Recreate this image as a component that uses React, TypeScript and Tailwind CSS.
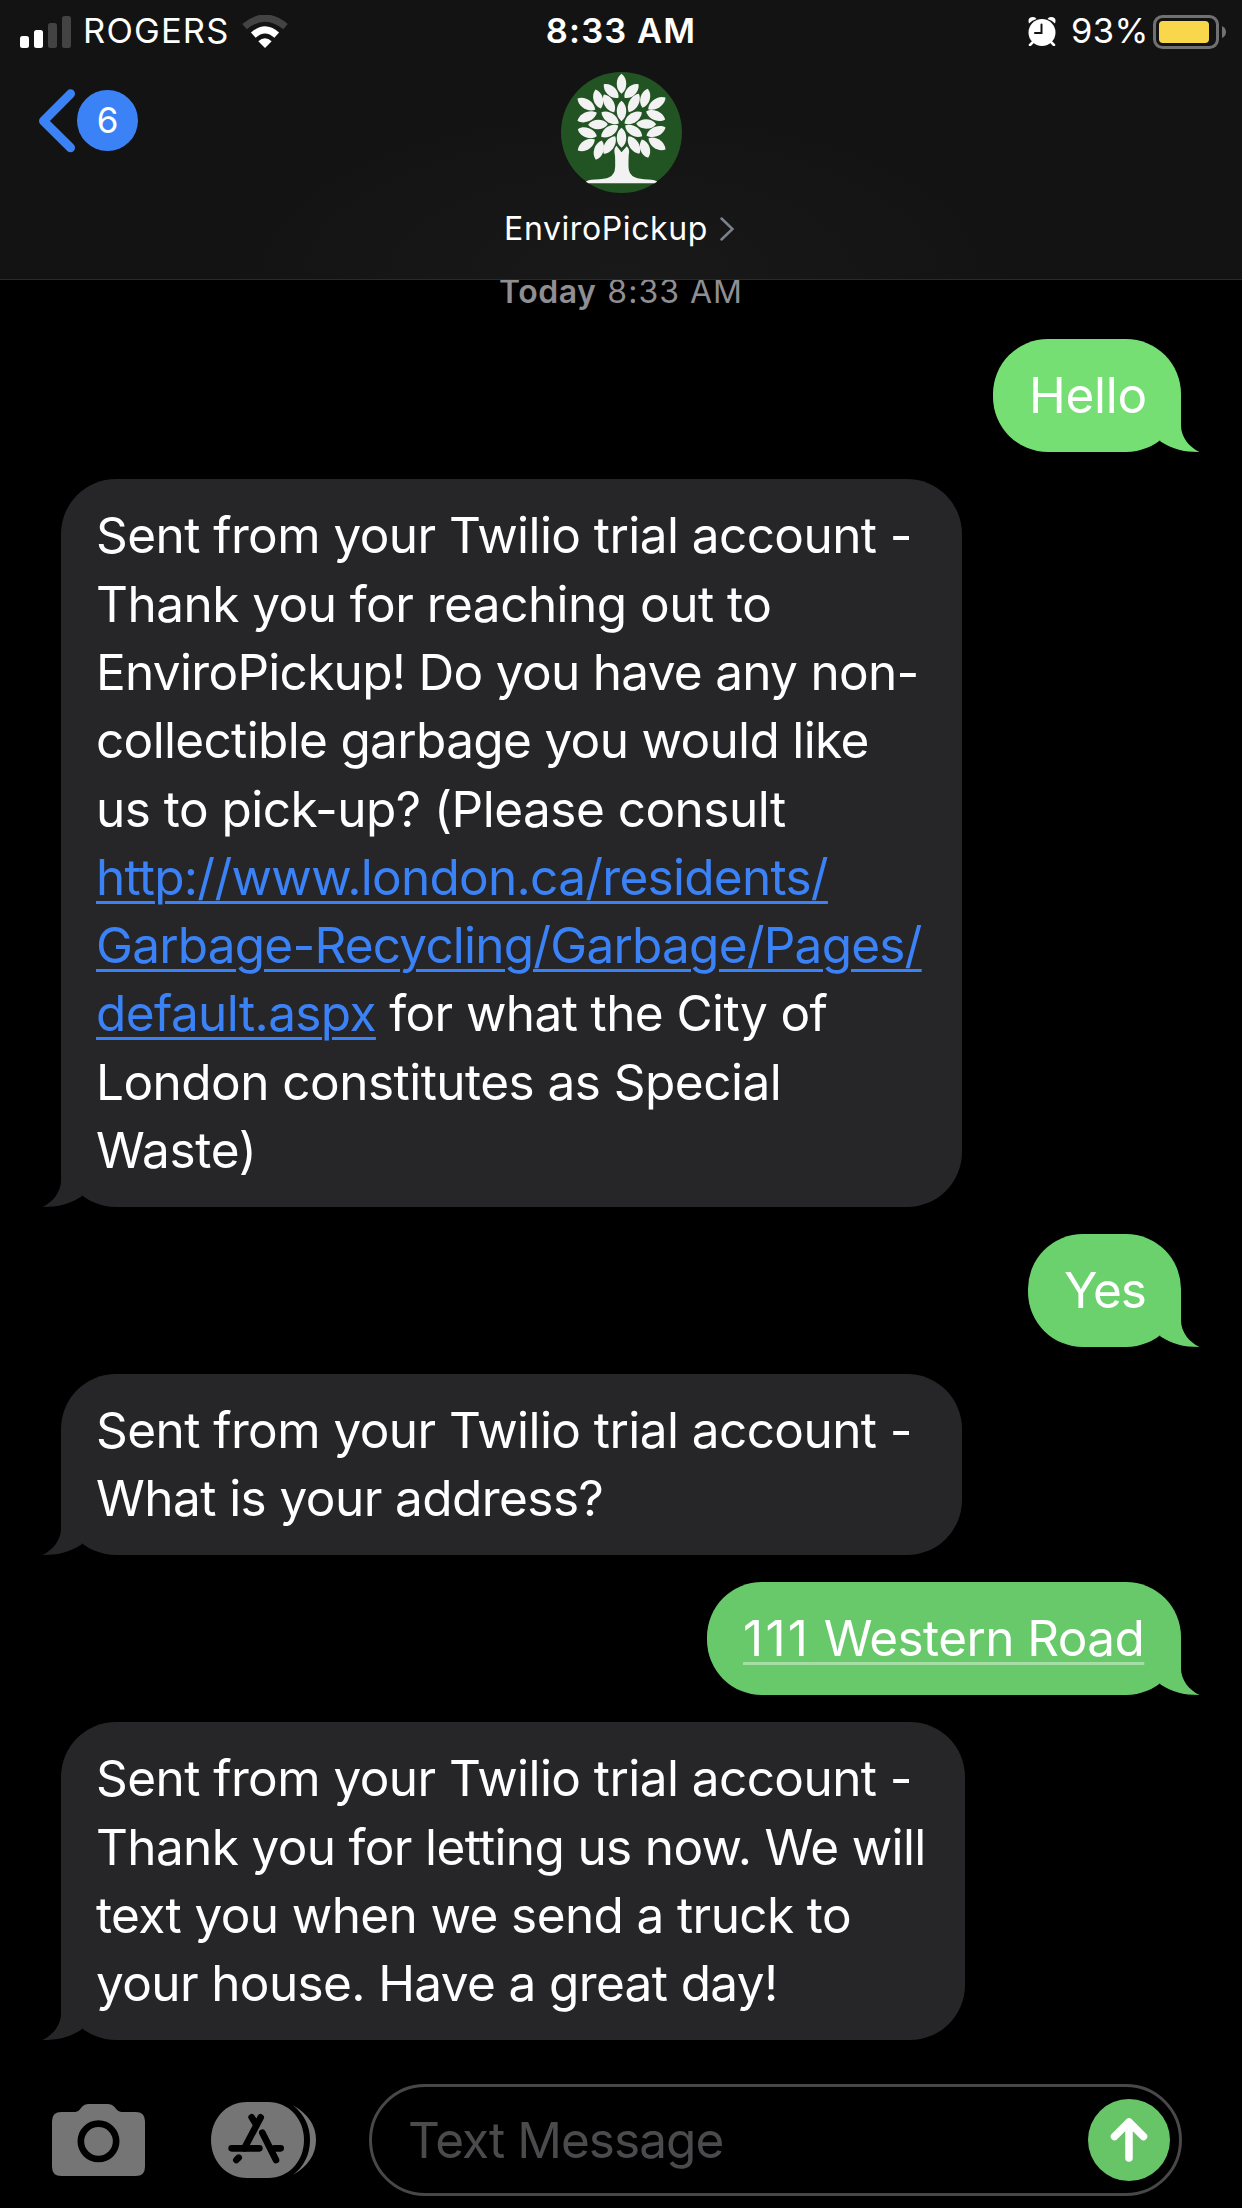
import React from 'react'
import { clsx } from 'clsx'

type Line = {
  text: React.ReactNode
  tracking?: string
  link?: boolean
  rest?: string
}

interface BubbleProps {
  side: 'sent' | 'received'
  fill: string
  text: string
  width: string
  lines: Line[]
}

/* end points of every leaf */
const leaves = [
  [545, 221, 545, 281],
  [492, 252, 536, 293],
  [596, 252, 554, 293],
  [467, 268, 483, 325],
  [624, 266, 608, 323],
  [413, 295, 466, 329],
  [677, 292, 625, 327],
  [492, 283, 523, 336],
  [597, 281, 567, 336],
  [545, 302, 545, 363],
  [485, 336, 537, 370],
  [606, 336, 554, 370],
  [413, 362, 471, 338],
  [676, 358, 619, 334],
  [445, 374, 504, 372],
  [589, 371, 649, 372],
  [414, 387, 471, 408],
  [677, 382, 620, 406],
  [484, 410, 535, 376],
  [607, 408, 556, 376],
  [414, 451, 465, 418],
  [677, 448, 626, 414],
  [545, 383, 545, 443],
  [492, 461, 526, 408],
  [599, 460, 566, 408],
  [468, 479, 486, 421],
  [625, 473, 606, 418],
]

function leafPath([x1, y1, x2, y2]: number[]) {
  const dx = x2 - x1
  const dy = y2 - y1
  const len = Math.hypot(dx, dy)
  const nx = (-dy / len) * 19
  const ny = (dx / len) * 19
  const p = (t: number, s: number) => `${x1 + dx * t + nx * s} ${y1 + dy * t + ny * s}`
  return `M${x1} ${y1}C${p(0.22, 1)} ${p(0.78, 1)} ${x2} ${y2}C${p(0.78, -1)} ${p(0.22, -1)} ${x1} ${y1}Z`
}

function TreeAvatar() {
  return (
    <svg className="h-[121px] w-[121px]" viewBox="363.5 215.5 363 363">
      <circle cx="545" cy="397" r="181.5" fill="#225323" />
      <g fill="#f2f2f2">
        {leaves.map((leaf, i) => (
          <path key={i} d={leafPath(leaf)} />
        ))}
        <path d="M530 437Q522 445 524 458Q526 465 526 480V500Q525 525 508 531Q495 537 465 538Q442 539 438 545L446 549H644L652 545Q648 539 625 538Q600 537 585 531Q566 524 566 500V480Q566 465 568 455Q569 446 561 438L545 456Z" />
      </g>
    </svg>
  )
}

function StatusBar() {
  return (
    <div className="grid h-[63px] grid-cols-[1fr_auto_1fr] items-center text-[34.5px] leading-none text-white">
      <div className="flex items-center pl-5">
        <svg className="h-8 w-[51px]" viewBox="0 0 51 32">
          <rect x="0" y="20" width="9" height="12" rx="2.5" fill="#fff" />
          <rect x="14" y="14" width="9" height="18" rx="2.5" fill="#fff" />
          <rect x="28" y="7" width="9" height="25" rx="2.5" fill="#434343" />
          <rect x="42" y="0" width="9" height="32" rx="2.5" fill="#434343" />
        </svg>
        <span className="ml-3 w-[159px] whitespace-nowrap tracking-[1.2px]">ROGERS</span>
        <svg className="h-[33px] w-[46px]" viewBox="0 0 46 33">
          <path d="M23 33L16.3 26.3Q23 20 29.7 26.3Z" fill="#fff" />
          <path d="M11.3 20.2Q23 9.6 34.7 20.2" fill="none" stroke="#fff" strokeWidth="7" />
          <path d="M2.5 11.6Q23 -5.5 43.5 11.6" fill="none" stroke="#434343" strokeWidth="7" />
        </svg>
      </div>
      <span className="font-semibold tracking-[1.1px]">8:33 AM</span>
      <div className="flex items-center justify-end pr-[15px]">
        <svg className="h-[29px] w-[28px]" viewBox="0 0 28 29">
          <circle cx="14" cy="15.5" r="13.5" fill="#fff" />
          <path d="M1 6.5Q-1 0 5 0Q7.5 0 8.5 2Q4 3 1 6.5ZM27 6.5Q29 0 23 0Q20.5 0 19.5 2Q24 3 27 6.5Z" fill="#fff" />
          <path d="M5 25L2 28M23 25L26 28" stroke="#fff" strokeWidth="2.5" strokeLinecap="round" />
          <path d="M13.5 7.5V16H7" fill="none" stroke="#131313" strokeWidth="2" strokeLinecap="round" />
        </svg>
        <span className="ml-[15px] mr-2 w-[74px] whitespace-nowrap tracking-[0.4px]">93%</span>
        <svg className="h-[34px] w-[74px]" viewBox="0 0 74 34">
          <rect x="1.5" y="1.5" width="63" height="31" rx="8" fill="none" stroke="#717171" strokeWidth="3" />
          <rect x="6" y="6" width="50" height="22" rx="4" fill="#f8d84a" />
          <path d="M69 11Q73 13 73 17Q73 21 69 23Z" fill="#717171" />
        </svg>
      </div>
    </div>
  )
}

function Header() {
  return (
    <header className="relative z-10 h-[280px] border-b border-[#2a2a2a] bg-[#131313] bg-radial-[at_50%_100%] from-[#191919] to-[#131313] to-45%">
      <StatusBar />
      <div className="grid grid-cols-3">
        <div className="flex items-start gap-0.5 pl-[38px] pt-[26px]">
          <svg className="h-[64px] w-[37px]" viewBox="0 0 37 64">
            <path d="M32.5 4.8L5.5 32L32.5 58.8" fill="none" stroke="#3b82f7" strokeWidth="9" strokeLinecap="round" strokeLinejoin="round" />
          </svg>
          <div className="mt-px flex h-[61px] w-[61px] items-center justify-center rounded-full bg-[#3b82f7] text-[35px] leading-none text-white">
            6
          </div>
        </div>
        <div className="flex flex-col items-center pt-[9px]">
          <TreeAvatar />
          <div className="mr-1 mt-3 flex items-center gap-3 text-[32px] leading-[48px] text-white">
            <span className="tracking-[0.6px]">EnviroPickup</span>
            <svg className="h-6 w-3.5" viewBox="0 0 14 24">
              <path d="M1.5 1.5L12.5 12L1.5 22.5" fill="none" stroke="#7c828c" strokeWidth="2.5" strokeLinecap="round" />
            </svg>
          </div>
        </div>
      </div>
    </header>
  )
}

function Bubble({ side, fill, text, width, lines }: BubbleProps) {
  const sent = side === 'sent'
  return (
    <div
      className={clsx(
        'relative rounded-[55px] py-[22.33px] text-[49.5px] leading-[68.333px] whitespace-nowrap text-white',
        fill,
        width,
        sent ? 'self-end pl-9' : 'self-start pl-[35px]'
      )}
    >
      {lines.map((line, i) => (
        <div key={i} className={line.tracking}>
          {line.link ? (
            <a
              className={clsx(
                'underline underline-offset-[6px] decoration-[3px]',
                sent ? 'decoration-white/40' : 'text-[#3b82f7]'
              )}
            >
              {line.text}
            </a>
          ) : (
            line.text
          )}
          {line.rest}
        </div>
      ))}
      <svg
        className={clsx(
          'absolute bottom-0 h-14 w-[60px]',
          text,
          sent ? '-right-[19px]' : '-left-[19px] -scale-x-100'
        )}
        viewBox="0 0 60 56"
      >
        <path d="M41 0V29.5C41 41 49 51 59.5 56C43 56 32 53 20.5 45.5L10 20Z" fill="currentColor" />
      </svg>
    </div>
  )
}

const messages: BubbleProps[] = [
  {
    side: 'sent',
    fill: 'bg-[#75df74]',
    text: 'text-[#75df74]',
    width: 'w-[188px]',
    lines: [{ text: 'Hello', tracking: 'tracking-[-0.3px]' }],
  },
  {
    side: 'received',
    fill: 'bg-[#262628]',
    text: 'text-[#262628]',
    width: 'w-[901px]',
    lines: [
      { text: 'Sent from your Twilio trial account -', tracking: 'tracking-[-0.57px]' },
      { text: 'Thank you for reaching out to', tracking: 'tracking-[-0.53px]' },
      { text: 'EnviroPickup! Do you have any non-', tracking: 'tracking-[-0.7px]' },
      { text: 'collectible garbage you would like', tracking: 'tracking-[-0.66px]' },
      { text: 'us to pick-up? (Please consult', tracking: 'tracking-[-0.51px]' },
      { text: 'http://www.london.ca/residents/', tracking: 'tracking-[-0.73px]', link: true },
      { text: 'Garbage-Recycling/Garbage/Pages/', tracking: 'tracking-[-0.79px]', link: true },
      {
        text: 'default.aspx',
        tracking: 'tracking-[-0.6px]',
        link: true,
        rest: ' for what the City of',
      },
      { text: 'London constitutes as Special', tracking: 'tracking-[-0.53px]' },
      { text: 'Waste)', tracking: 'tracking-[-0.3px]' },
    ],
  },
  {
    side: 'sent',
    fill: 'bg-[#6bd16d]',
    text: 'text-[#6bd16d]',
    width: 'w-[153px]',
    lines: [{ text: 'Yes', tracking: 'tracking-[-0.9px]' }],
  },
  {
    side: 'received',
    fill: 'bg-[#262628]',
    text: 'text-[#262628]',
    width: 'w-[901px]',
    lines: [
      { text: 'Sent from your Twilio trial account -', tracking: 'tracking-[-0.57px]' },
      { text: 'What is your address?', tracking: 'tracking-[-0.56px]' },
    ],
  },
  {
    side: 'sent',
    fill: 'bg-[#68c96a]',
    text: 'text-[#68c96a]',
    width: 'w-[474px]',
    lines: [
      {
        text: (
          <>
            <span className="tracking-[2.3px]">111</span> Western Road
          </>
        ),
        tracking: 'tracking-[-0.6px]',
        link: true,
      },
    ],
  },
  {
    side: 'received',
    fill: 'bg-[#262628]',
    text: 'text-[#262628]',
    width: 'w-[904px]',
    lines: [
      { text: 'Sent from your Twilio trial account -', tracking: 'tracking-[-0.57px]' },
      { text: 'Thank you for letting us now. We will', tracking: 'tracking-[-0.65px]' },
      { text: 'text you when we send a truck to', tracking: 'tracking-[-0.61px]' },
      { text: 'your house. Have a great day!', tracking: 'tracking-[-0.63px]' },
    ],
  },
]

function Composer() {
  return (
    <footer className="flex h-[168px] items-start pl-[52px] pr-[60px] pt-[44px]">
      <svg className="mt-5 h-[72px] w-[93px]" viewBox="0 0 279 216">
        <path d="M28 24H70Q79 24 84 16L90 8Q97 0 108 0H168Q180 0 187 8L193 16Q199 24 208 24H251Q279 24 279 52V188Q279 216 251 216H28Q0 216 0 188V52Q0 24 28 24Z" fill="#757575" />
        <circle cx="139.5" cy="112" r="53" fill="none" stroke="#000" strokeWidth="20" />
      </svg>
      <svg className="ml-[66px] mt-[18px] h-[76px] w-[105px]" viewBox="0 0 315 228">
        <path d="M246 10Q315 50 315 114Q315 178 246 219Q297 178 297 114Q297 52 246 10Z" fill="#757575" />
        <path d="M108 0H171C235 0 279 52 279 114S235 228 171 228H108C44 228 0 176 0 114S44 0 108 0Z" fill="#757575" />
        <g fill="none" stroke="#000" strokeWidth="20" strokeLinecap="round">
          <path d="M149 46L100 139" />
          <path d="M122 46L136 68" />
          <path d="M62 139H145" />
          <path d="M154 92L195 174" />
          <path d="M190 139H209" />
          <path d="M83 167L76 174" />
        </g>
      </svg>
      <div className="ml-[53px] flex h-28 flex-1 items-center justify-between rounded-full border-[3px] border-[#48484a] pl-9 pr-[9px]">
        <span className="text-[49.5px] tracking-[-0.95px] text-[#4b4b4d]">Text Message</span>
        <svg className="h-[82px] w-[82px]" viewBox="0 0 82 82">
          <circle cx="41" cy="41" r="41" fill="#67c467" />
          <path d="M41 59V23M26.5 37.5L41 23L55.5 37.5" fill="none" stroke="#fff" strokeWidth="7.5" strokeLinecap="round" strokeLinejoin="round" />
        </svg>
      </div>
    </footer>
  )
}

export default function App() {
  return (
    <div className="flex h-[2208px] w-[1242px] flex-col overflow-hidden bg-black font-['Inter',sans-serif]">
      <Header />
      <div className="-mt-[11px] flex h-[70px] justify-center gap-[11px] text-[32px] leading-[46px] text-[#8e8e93]">
        <span className="font-semibold tracking-[0.5px]">Today</span>
        <span className="tracking-[1px]">8:33 AM</span>
      </div>
      <main className="flex flex-1 flex-col gap-[27px] px-[61px]">
        {messages.map((message, i) => (
          <Bubble key={i} {...message} />
        ))}
      </main>
      <Composer />
    </div>
  )
}
